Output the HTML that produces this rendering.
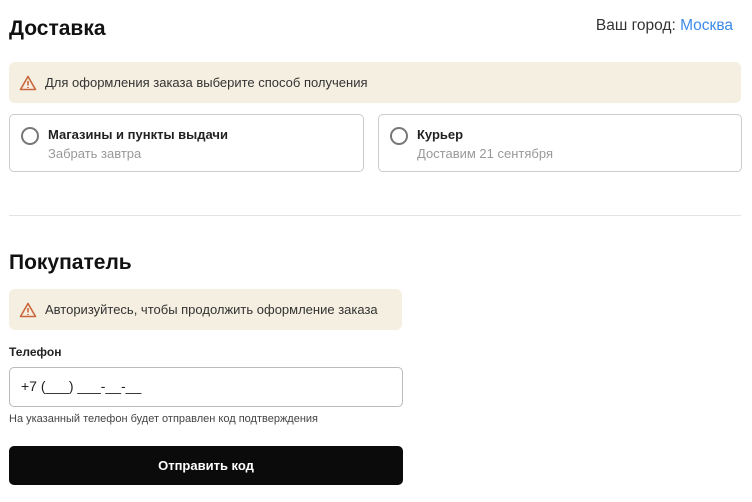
<!DOCTYPE html><html><head><meta charset="utf-8"><style>
body{margin:0;width:752px;height:502px;background:#fff;font-family:"Liberation Sans",sans-serif;color:#111;position:relative;overflow:hidden}
.a{position:absolute}
h2{margin:0;font-size:21px;font-weight:bold;position:absolute;left:9px}
.ban{position:absolute;left:9px;background:#f5efe1;border-radius:6px;height:41px;font-size:13px;color:#333;display:flex;align-items:center}
.ban svg{margin:0 8px 0 10px}
.card{position:absolute;top:114px;height:58px;border:1.5px solid #ccc;border-radius:5px;box-sizing:border-box}
.rad{position:absolute;left:11px;top:12px;width:14px;height:14px;border:2px solid #777;border-radius:50%}
.t1{position:absolute;left:38px;top:12px;font-size:13px;font-weight:bold;color:#222}
.t2{position:absolute;left:38px;top:31px;font-size:13px;color:#999}
</style></head><body>
<h2 style="top:17px">Доставка</h2>
<div class="a" style="right:19px;top:17px;font-size:15.5px;color:#333">Ваш город: <span style="color:#3d8be8">Москва</span></div>
<div class="ban" style="top:62px;width:732px"><svg width="18" height="16" viewBox="0 0 18 16"><path d="M9 1.5L1.5 14.5h15z" fill="none" stroke="#c9663c" stroke-width="1.6" stroke-linejoin="round"/><path d="M9 6v4.5M9 12v1" stroke="#c9663c" stroke-width="1.6"/></svg>Для оформления заказа выберите способ получения</div>
<div class="card" style="left:9px;width:355px"><div class="rad"></div><div class="t1">Магазины и пункты выдачи</div><div class="t2">Забрать завтра</div></div>
<div class="card" style="left:378px;width:364px"><div class="rad"></div><div class="t1">Курьер</div><div class="t2">Доставим 21 сентября</div></div>
<div class="a" style="left:9px;top:215px;width:732px;height:1px;background:#e3e3e3"></div>
<h2 style="top:251px">Покупатель</h2>
<div class="ban" style="top:289px;width:393px"><svg width="18" height="16" viewBox="0 0 18 16"><path d="M9 1.5L1.5 14.5h15z" fill="none" stroke="#c9663c" stroke-width="1.6" stroke-linejoin="round"/><path d="M9 6v4.5M9 12v1" stroke="#c9663c" stroke-width="1.6"/></svg>Авторизуйтесь, чтобы продолжить оформление заказа</div>
<div class="a" style="left:9px;top:345px;font-size:12px;font-weight:bold;color:#222">Телефон</div>
<div class="a" style="left:9px;top:367px;width:394px;height:40px;border:1.5px solid #bbb;border-radius:5px;box-sizing:border-box;font-size:14px;padding:10px 0 0 11px;color:#222">+7 (___) ___-__-__</div>
<div class="a" style="left:9px;top:413px;font-size:11px;color:#444">На указанный телефон будет отправлен код подтверждения</div>
<div class="a" style="left:9px;top:446px;width:394px;height:39px;background:#0b0b0b;border-radius:5px;color:#fff;font-size:13px;font-weight:bold;text-align:center;line-height:39px">Отправить код</div>
</body></html>
